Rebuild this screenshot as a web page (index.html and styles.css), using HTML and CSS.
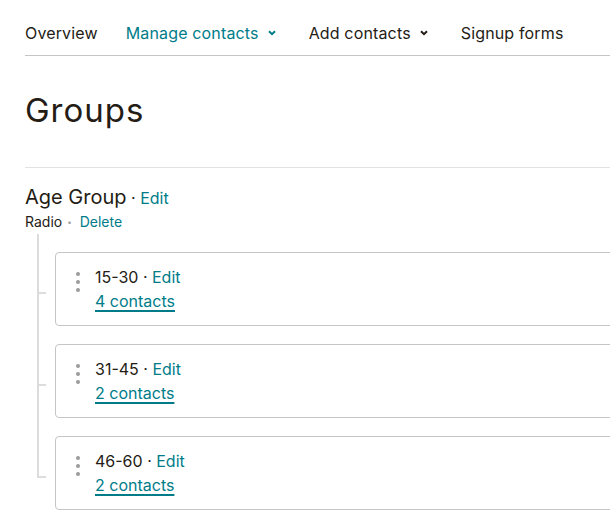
FILE: index.html
```html
<!DOCTYPE html>
<html lang="en">
<head>
<meta charset="utf-8">
<title>Groups</title>
<link rel="stylesheet" href="styles.css">
</head>
<body>
<div class="page">
  <nav class="tabs">
    <a class="tab">Overview</a>
    <a class="tab has-menu active">Manage contacts <svg class="chev" width="8" height="6" viewBox="0 0 8 6"><path d="M1 1.2 L4 4.2 L7 1.2" fill="none" stroke="currentColor" stroke-width="2"/></svg></a>
    <a class="tab has-menu">Add contacts <svg class="chev" width="8" height="6" viewBox="0 0 8 6"><path d="M1 1.2 L4 4.2 L7 1.2" fill="none" stroke="currentColor" stroke-width="2"/></svg></a>
    <a class="tab">Signup forms</a>
  </nav>

  <h1 class="title">Groups</h1>

  <section class="group">
    <div class="group-head">
      <span class="group-name">Age Group</span><span class="sep"> · </span><a class="link">Edit</a>
    </div>
    <div class="group-meta">
      <span>Radio</span><span class="meta-dot">•</span><a class="link">Delete</a>
    </div>

    <ul class="tree">
      <li class="row">
        <div class="conn"><div class="conn-top"></div><div class="conn-bot"></div></div>
        <div class="card">
          <div class="handle"><i></i><i></i><i></i></div>
          <div class="card-body">
            <div class="item-title">15-30<span class="sep"> · </span><a class="link">Edit</a></div>
            <a class="count">4 contacts</a>
          </div>
        </div>
      </li>
      <li class="row">
        <div class="conn"><div class="conn-top"></div><div class="conn-bot"></div></div>
        <div class="card">
          <div class="handle"><i></i><i></i><i></i></div>
          <div class="card-body">
            <div class="item-title">31-45<span class="sep"> · </span><a class="link">Edit</a></div>
            <a class="count">2 contacts</a>
          </div>
        </div>
      </li>
      <li class="row last">
        <div class="conn"><div class="conn-top"></div><div class="conn-bot"></div></div>
        <div class="card">
          <div class="handle"><i></i><i></i><i></i></div>
          <div class="card-body">
            <div class="item-title">46-60<span class="sep"> · </span><a class="link">Edit</a></div>
            <a class="count">2 contacts</a>
          </div>
        </div>
      </li>
    </ul>
  </section>
</div>
</body>
</html>
```

FILE: styles.css
```css
html, body {
  margin: 0;
  padding: 0;
  overflow: hidden;
  background: #fff;
}

body {
  font-family: "Inter", "Roboto", "Liberation Sans", sans-serif;
  color: #241c15;
}

.page {
  width: 620px;
  padding-left: 25px;
}

.tabs {
  display: flex;
  align-items: center;
  gap: 28px;
  height: 56px;
  border-bottom: 1px solid #c5c5c5;
  font-size: 16px;
  font-weight: 400;
  letter-spacing: 0.15px;
  padding-top: 10px;
  box-sizing: border-box;
}

.tab {
  display: flex;
  align-items: center;
  gap: 9px;
  color: #241c15;
}

.tab.has-menu {
  margin-right: 5px;
}

.tab.active {
  color: #007c89;
}

.chev {
  display: block;
}

.title {
  margin: 32px 0 35px;
  font-size: 33px;
  line-height: 44px;
  font-weight: 400;
  letter-spacing: 1px;
}

.group {
  border-top: 1px solid #e2e2e2;
  padding-top: 15px;
}

.group-head {
  font-size: 16px;
  line-height: 28px;
}

.group-name {
  font-size: 20px;
}

.sep {
  color: #241c15;
}

.link {
  color: #007c89;
}

.group-meta {
  font-size: 14px;
  line-height: 20px;
  display: flex;
  align-items: center;
}

.meta-dot {
  color: #a0a0a0;
  font-size: 8px;
  margin: 0 8px 0 5px;
}

.tree {
  list-style: none;
  margin: 2px 0 0 12px;
  padding: 0;
}

.row {
  display: flex;
  padding-top: 18px;
}

.conn {
  width: 9px;
  flex-shrink: 0;
  margin-top: -18px;
  margin-right: 9px;
  display: flex;
  flex-direction: column;
}

.conn-top {
  height: 58px;
  border-left: 2px solid #dcdcdc;
  border-bottom: 2px solid #dcdcdc;
}

.conn-bot {
  flex: 1;
  border-left: 2px solid #dcdcdc;
}

.row.last .conn-bot {
  border-left-color: transparent;
}

.card {
  flex: 1;
  display: flex;
  gap: 15px;
  border: 1px solid #c5c5c5;
  border-radius: 4px;
  padding: 12px 12px 12px 20px;
}

.handle {
  display: flex;
  flex-direction: column;
  gap: 4px;
  margin-top: 7px;
}

.handle i {
  display: block;
  width: 4px;
  height: 4px;
  border-radius: 50%;
  background: #9b9b9b;
}

.card-body {
  font-size: 16px;
  line-height: 24px;
}

.item-title {
  display: block;
}

.count {
  color: #007c89;
  text-decoration: underline;
  text-underline-offset: 3px;
  text-decoration-thickness: 1.5px;
}
```
